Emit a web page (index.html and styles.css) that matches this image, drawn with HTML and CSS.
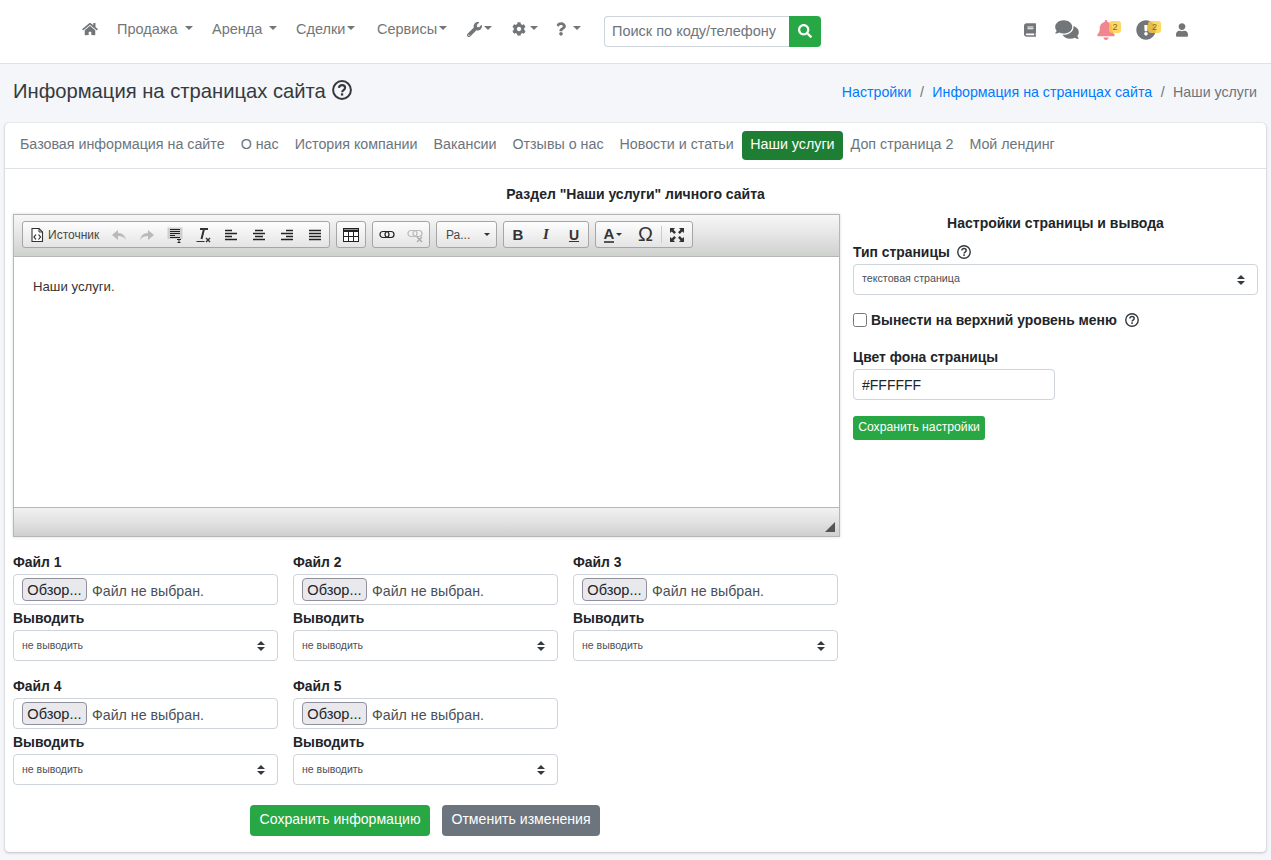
FILE: index.html
```html
<!DOCTYPE html>
<html lang="ru">
<head>
<meta charset="utf-8">
<title>Информация на страницах сайта</title>
<link rel="stylesheet" href="styles.css">
</head>
<body>
<svg class="defs" aria-hidden="true">
  <symbol id="i-home" viewBox="0 0 576 512"><path d="M280.37 148.26L96 300.11V464a16 16 0 0 0 16 16l112.06-.29a16 16 0 0 0 15.92-16V368a16 16 0 0 1 16-16h64a16 16 0 0 1 16 16v95.64a16 16 0 0 0 16 16.05L464 480a16 16 0 0 0 16-16V300L295.67 148.26a12.19 12.19 0 0 0-15.3 0zM571.6 251.47L488 182.56V44.05a12 12 0 0 0-12-12h-56a12 12 0 0 0-12 12v72.61L318.47 43a48 48 0 0 0-61 0L4.34 251.47a12 12 0 0 0-1.6 16.9l25.5 31A12 12 0 0 0 45.15 301l235.22-193.74a12.19 12.19 0 0 1 15.3 0L530.9 301a12 12 0 0 0 16.9-1.6l25.5-31a12 12 0 0 0-1.7-16.93z"/></symbol>
  <symbol id="i-search" viewBox="0 0 512 512"><path d="M505 442.7L405.3 343c-4.5-4.5-10.6-7-17-7H372c27.6-35.3 44-79.7 44-128C416 93.1 322.9 0 208 0S0 93.1 0 208s93.1 208 208 208c48.3 0 92.7-16.4 128-44v16.3c0 6.4 2.5 12.5 7 17l99.7 99.7c9.4 9.4 24.6 9.4 33.9 0l28.3-28.3c9.4-9.4 9.4-24.6.1-34zM208 336c-70.7 0-128-57.2-128-128 0-70.7 57.2-128 128-128 70.7 0 128 57.2 128 128 0 70.7-57.2 128-128 128z"/></symbol>
  <symbol id="i-user" viewBox="0 0 448 512"><path d="M224 256c70.7 0 128-57.3 128-128S294.7 0 224 0 96 57.3 96 128s57.3 128 128 128zm89.6 32h-16.7c-22.2 10.2-46.9 16-72.9 16s-50.6-5.8-72.9-16h-16.7C60.2 288 0 348.2 0 422.4V464c0 26.5 21.5 48 48 48h352c26.5 0 48-21.5 48-48v-41.6c0-74.2-60.2-134.4-134.4-134.4z"/></symbol>
  <symbol id="i-bell" viewBox="0 0 448 512"><path d="M224 512c35.32 0 63.97-28.65 63.97-64H160.03c0 35.35 28.65 64 63.97 64zm215.39-149.71c-19.32-20.76-55.47-51.99-55.47-154.29 0-77.7-54.48-139.9-127.94-155.16V32c0-17.67-14.32-32-31.98-32s-31.98 14.33-31.98 32v20.84C118.56 68.1 64.08 130.3 64.08 208c0 102.3-36.15 133.53-55.47 154.29-6 6.45-8.66 14.16-8.61 21.71.11 16.4 12.98 32 32.1 32h383.8c19.12 0 32-15.6 32.1-32 .05-7.55-2.61-15.27-8.61-21.71z"/></symbol>
  <symbol id="i-excl" viewBox="0 0 512 512"><path d="M504 256c0 136.997-111.043 248-248 248S8 392.997 8 256C8 119.083 119.043 8 256 8s248 111.083 248 248zm-248 50c-25.405 0-46 20.595-46 46s20.595 46 46 46 46-20.595 46-46-20.595-46-46-46zm-43.673-165.346l7.418 136c.347 6.364 5.609 11.346 11.982 11.346h48.546c6.373 0 11.635-4.982 11.982-11.346l7.418-136c.375-6.874-5.098-12.654-11.982-12.654h-63.383c-6.884 0-12.356 5.78-11.981 12.654z"/></symbol>
  <symbol id="i-book" viewBox="0 0 448 512"><path d="M448 360V24c0-13.3-10.7-24-24-24H96C43 0 0 43 0 96v320c0 53 43 96 96 96h328c13.3 0 24-10.7 24-24v-16c0-7.5-3.5-14.3-8.9-18.7-4.2-15.4-4.2-59.3 0-74.7 5.4-4.3 8.9-11.1 8.9-18.6zM128 134c0-3.3 2.7-6 6-6h212c3.3 0 6 2.7 6 6v20c0 3.3-2.7 6-6 6H134c-3.3 0-6-2.7-6-6v-20zm0 64c0-3.3 2.7-6 6-6h212c3.3 0 6 2.7 6 6v20c0 3.3-2.7 6-6 6H134c-3.3 0-6-2.7-6-6v-20zm253.4 250H96c-17.7 0-32-14.3-32-32 0-17.6 14.4-32 32-32h285.4c-1.9 17.1-1.9 46.9 0 64z"/></symbol>
  <symbol id="i-comments" viewBox="0 0 576 512"><path d="M416 192c0-88.4-93.1-160-208-160S0 103.6 0 192c0 34.3 14.1 65.9 38 92-13.4 30.2-35.5 54.2-35.8 54.5-2.2 2.3-2.8 5.7-1.5 8.7S4.8 352 8 352c36.6 0 66.9-12.3 88.7-25 32.2 15.7 70.3 25 111.3 25 114.9 0 208-71.6 208-160zm122 220c23.9-26 38-57.7 38-92 0-66.9-53.5-124.2-129.3-148.1.9 6.6 1.3 13.3 1.3 20.1 0 105.9-107.7 192-240 192-10.8 0-21.3-.8-31.7-1.9C207.8 439.6 281.8 480 368 480c41 0 79.1-9.2 111.3-25 21.8 12.7 52.1 25 88.7 25 3.2 0 6.1-1.9 7.3-4.8 1.3-2.9.7-6.3-1.5-8.7-.3-.3-22.4-24.2-35.8-54.5z"/></symbol>
  <symbol id="i-wrench" viewBox="0 0 512 512"><path d="M507.73 109.1c-2.24-9.03-13.54-12.09-20.12-5.51l-74.36 74.36-67.88-11.31-11.31-67.88 74.36-74.36c6.62-6.62 3.43-17.9-5.66-20.16-47.38-11.74-99.55.91-136.58 37.93-39.64 39.64-50.55 97.1-34.05 147.2L18.74 402.76c-24.99 24.99-24.99 65.51 0 90.5 24.99 24.99 65.51 24.99 90.5 0l213.21-213.21c50.12 16.71 107.47 5.68 147.37-34.22 37.07-37.07 49.7-89.32 37.91-136.73zM64 472c-13.25 0-24-10.75-24-24 0-13.26 10.75-24 24-24s24 10.74 24 24c0 13.25-10.75 24-24 24z"/></symbol>
  <symbol id="i-cog" viewBox="0 0 512 512"><path d="M487.4 315.7l-42.6-24.6c4.3-23.2 4.3-47 0-70.2l42.6-24.6c4.9-2.8 7.1-8.6 5.5-14-11.1-35.6-30-67.8-54.7-94.6-3.8-4.1-10-5.1-14.8-2.3L380.8 110c-17.9-15.4-38.5-27.3-60.8-35.1V25.8c0-5.6-3.9-10.5-9.4-11.7-36.7-8.2-74.3-7.8-109.2 0-5.5 1.2-9.4 6.1-9.4 11.7V75c-22.2 7.9-42.8 19.8-60.8 35.1L88.7 85.5c-4.9-2.8-11-1.9-14.8 2.3-24.7 26.7-43.6 58.9-54.7 94.6-1.7 5.4.6 11.2 5.5 14L67.3 221c-4.3 23.2-4.3 47 0 70.2l-42.6 24.6c-4.9 2.8-7.1 8.6-5.5 14 11.1 35.6 30 67.8 54.7 94.6 3.8 4.1 10 5.1 14.8 2.3l42.6-24.6c17.9 15.4 38.5 27.3 60.8 35.1v49.2c0 5.6 3.9 10.5 9.4 11.7 36.7 8.2 74.3 7.8 109.2 0 5.5-1.2 9.4-6.1 9.4-11.7v-49.2c22.2-7.9 42.8-19.8 60.8-35.1l42.6 24.6c4.9 2.8 11 1.9 14.8-2.3 24.7-26.7 43.6-58.9 54.7-94.6 1.5-5.5-.7-11.3-5.6-14.1zM256 336c-44.1 0-80-35.9-80-80s35.9-80 80-80 80 35.9 80 80-35.9 80-80 80z"/></symbol>
  <symbol id="i-q" viewBox="0 0 384 512"><path d="M202.021 0C122.202 0 70.503 32.703 29.914 91.026c-7.363 10.58-5.093 25.086 5.178 32.874l43.138 32.709c10.373 7.865 25.132 6.026 33.253-4.148 25.049-31.381 43.63-49.449 82.757-49.449 30.764 0 68.816 19.799 68.816 49.631 0 22.552-18.617 34.134-48.993 51.164-35.423 19.86-82.299 44.576-82.299 106.405V320c0 13.255 10.745 24 24 24h72.471c13.255 0 24-10.745 24-24v-5.773c0-42.86 125.268-44.645 125.268-160.627C377.504 66.256 286.902 0 202.021 0zM192 373.459c-38.196 0-69.271 31.075-69.271 69.271 0 38.195 31.075 69.27 69.271 69.27s69.271-31.075 69.271-69.271-31.075-69.27-69.271-69.27z"/></symbol>
  <symbol id="i-help" viewBox="0 0 20 20"><circle cx="10" cy="10" r="8.9" fill="none" stroke="currentColor" stroke-width="2"/><path d="M6.900 7.800C7.100 6 8.500 5.100 10.100 5.100c1.700 0 3 1 3 2.600 0 2.400-3 2.300-3 4.600" fill="none" stroke="currentColor" stroke-width="2.100"/><rect x="8.900" y="13.300" width="2.300" height="2.300" fill="currentColor"/></symbol>
</svg>

<header class="topbar">
  <nav class="menu">
    <a class="menu-home"><svg class="ic ic-home"><use href="#i-home"/></svg></a>
    <a class="menu-link m-sale">Продажа<i class="caret c-wide"></i></a>
    <a class="menu-link m-rent">Аренда<i class="caret c-wide"></i></a>
    <a class="menu-link m-deal">Сделки<i class="caret"></i></a>
    <a class="menu-link m-serv">Сервисы<i class="caret"></i></a>
    <a class="menu-link m-wrench"><svg class="ic ic-tool"><use href="#i-wrench"/></svg><i class="caret"></i></a>
    <a class="menu-link m-cog"><svg class="ic ic-cog"><use href="#i-cog"/></svg><i class="caret"></i></a>
    <a class="menu-link m-q"><svg class="ic ic-q"><use href="#i-q"/></svg><i class="caret c-wide"></i></a>
    <form class="search">
      <input class="search-input" type="text" placeholder="Поиск по коду/телефону">
      <button class="search-btn" type="button"><svg class="ic-search"><use href="#i-search"/></svg></button>
    </form>
  </nav>
  <div class="tray">
    <a class="tray-item t-book"><svg class="t-ic-book"><use href="#i-book"/></svg></a>
    <a class="tray-item t-comments"><svg class="t-ic-comments"><use href="#i-comments"/></svg></a>
    <a class="tray-item t-bell"><svg class="t-ic-bell"><use href="#i-bell"/></svg><span class="badge">2</span></a>
    <a class="tray-item t-excl"><svg class="t-ic-excl"><use href="#i-excl"/></svg><span class="badge badge-excl">2</span></a>
    <a class="tray-item t-user"><svg class="t-ic-user"><use href="#i-user"/></svg></a>
  </div>
</header>

<div class="page-head">
  <h1 class="page-title">Информация на страницах сайта <svg class="help-big"><use href="#i-help"/></svg></h1>
  <ol class="crumbs">
    <li><a>Настройки</a></li>
    <li class="sep">/</li>
    <li><a>Информация на страницах сайта</a></li>
    <li class="sep">/</li>
    <li class="current">Наши услуги</li>
  </ol>
</div>

<main class="card">
  <div class="tabs">
    <a class="tab">Базовая информация на сайте</a>
    <a class="tab">О нас</a>
    <a class="tab">История компании</a>
    <a class="tab">Вакансии</a>
    <a class="tab">Отзывы о нас</a>
    <a class="tab">Новости и статьи</a>
    <a class="tab tab-active">Наши услуги</a>
    <a class="tab">Доп страница 2</a>
    <a class="tab">Мой лендинг</a>
  </div>
  <div class="card-body">
    <h2 class="section-title">Раздел "Наши услуги" личного сайта</h2>
    <div class="columns">
      <section class="col-main">
        <div class="editor">
          <div class="ed-toolbar">
            <div class="ed-group ed-g1">
              <span class="ed-btn ed-source">
                <svg class="ed-ic" viewBox="0 0 16 16"><path d="M3 1.500h7l3.500 3.500v9.500H3z" fill="#fff" stroke="#333" stroke-width="1.100"/><path d="M10 1.500V5h3.500" fill="none" stroke="#333"/><path d="M7 7.500L5 10l2 2.500M9.500 7.500l2 2.500-2 2.500" fill="none" stroke="#222" stroke-width="1.200"/></svg>
                <span class="ed-source-text">Источник</span>
              </span>
              <span class="ed-btn"><svg class="ed-ic" viewBox="0 0 16 16"><path d="M1 8l6-5v3c5 0 7 3 8 7-2-3-4-4-8-4v4z" fill="#b9b9b9"/></svg></span>
              <span class="ed-btn"><svg class="ed-ic" viewBox="0 0 16 16"><path d="M15 8L9 3v3C4 6 2 9 1 13c2-3 4-4 8-4v4z" fill="#b9b9b9"/></svg></span>
              <span class="ed-btn"><svg class="ed-ic" viewBox="0 0 16 16"><rect x="0.500" y="0.500" width="15" height="11.500" fill="#cfcfcf"/><path d="M3 2.500h10M3 4.500h10M3 6.500h10M3 8.500h5M3 10.500h10" stroke="#222"/><path d="M10 12.500h4M12 12.500v3M10.500 15.500h3" stroke="#222"/></svg></span>
              <span class="ed-btn"><svg class="ed-ic" viewBox="0 0 16 16"><path d="M5 2h8M9 2L6.500 12" fill="none" stroke="#333" stroke-width="2"/><path d="M1.500 14.500h8" stroke="#333"/><path d="M11 11l4 4M15 11l-4 4" stroke="#333" stroke-width="1.400"/></svg></span>
              <span class="ed-btn"><svg class="ed-ic" viewBox="0 0 16 16"><path d="M2 3.500h7M2 6.500h12M2 9.500h7M2 12.500h12" stroke="#222" stroke-width="1.400"/></svg></span>
              <span class="ed-btn"><svg class="ed-ic" viewBox="0 0 16 16"><path d="M4 3.500h8M2 6.500h12M4 9.500h8M2 12.500h12" stroke="#222" stroke-width="1.400"/></svg></span>
              <span class="ed-btn"><svg class="ed-ic" viewBox="0 0 16 16"><path d="M7 3.500h7M2 6.500h12M7 9.500h7M2 12.500h12" stroke="#222" stroke-width="1.400"/></svg></span>
              <span class="ed-btn"><svg class="ed-ic" viewBox="0 0 16 16"><path d="M2 3.500h12M2 6.500h12M2 9.500h12M2 12.500h12" stroke="#222" stroke-width="1.400"/></svg></span>
            </div>
            <div class="ed-group">
              <span class="ed-btn ed-table"><svg class="ed-ic" viewBox="0 0 16 16"><rect x="0.500" y="1.500" width="15" height="13" fill="#fff" stroke="#222"/><path d="M0.500 2.500h15v2.500h-15z" fill="#222"/><path d="M0.500 9.500h15M5.500 5v9M10.500 5v9" stroke="#222"/></svg></span>
            </div>
            <div class="ed-group">
              <span class="ed-btn"><svg class="ed-ic" viewBox="0 0 16 16"><rect x="1" y="4.500" width="9" height="6" rx="3" fill="none" stroke="#222" stroke-width="1.200"/><rect x="6" y="4.500" width="9" height="6" rx="3" fill="none" stroke="#222" stroke-width="1.200"/></svg></span>
              <span class="ed-btn"><svg class="ed-ic" viewBox="0 0 16 16"><rect x="1" y="3.500" width="9" height="6" rx="3" fill="none" stroke="#bbb" stroke-width="1.200"/><rect x="6" y="3.500" width="9" height="6" rx="3" fill="none" stroke="#bbb" stroke-width="1.200"/><path d="M10 10l5 5M15 10l-5 5" stroke="#aaa" stroke-width="1.400"/></svg></span>
            </div>
            <div class="ed-group ed-combo">
              <span class="ed-combo-text">Ра...</span><i class="ed-arrow"></i>
            </div>
            <div class="ed-group">
              <span class="ed-btn ed-letter ed-b">B</span>
              <span class="ed-btn ed-letter ed-i">I</span>
              <span class="ed-btn ed-letter ed-u">U</span>
            </div>
            <div class="ed-group">
              <span class="ed-btn ed-color"><span class="ed-color-a">A</span><i class="ed-arrow ed-arrow-sm"></i></span>
              <span class="ed-btn ed-omega">Ω</span>
              <span class="ed-btn ed-max"><svg class="ed-ic" viewBox="0 0 16 16"><path d="M1 1h5L4.500 2.800 7 5.200 5.200 7 2.800 4.500 1 6zM15 1v5l-1.800-1.500L10.800 7 9 5.200l2.500-2.400L10 1zM1 15v-5l1.800 1.500L5.200 9 7 10.800l-2.500 2.400L6 15zM15 15h-5l1.500-1.800L9 10.800 10.800 9l2.400 2.500L15 10z" fill="#333"/></svg></span>
            </div>
          </div>
          <div class="ed-content"><p class="ed-text">Наши услуги.</p></div>
          <div class="ed-bottom"><i class="ed-resize"></i></div>
        </div>

        <div class="files">
          <div class="file-cell">
            <label class="lbl">Файл 1</label>
            <div class="file-box"><button class="file-btn" type="button">Обзор...</button><span class="file-name">Файл не выбран.</span></div>
            <label class="lbl lbl-out">Выводить</label>
            <select class="sel sel-out"><option>не выводить</option></select>
          </div>
          <div class="file-cell">
            <label class="lbl">Файл 2</label>
            <div class="file-box"><button class="file-btn" type="button">Обзор...</button><span class="file-name">Файл не выбран.</span></div>
            <label class="lbl lbl-out">Выводить</label>
            <select class="sel sel-out"><option>не выводить</option></select>
          </div>
          <div class="file-cell">
            <label class="lbl">Файл 3</label>
            <div class="file-box"><button class="file-btn" type="button">Обзор...</button><span class="file-name">Файл не выбран.</span></div>
            <label class="lbl lbl-out">Выводить</label>
            <select class="sel sel-out"><option>не выводить</option></select>
          </div>
          <div class="file-cell">
            <label class="lbl">Файл 4</label>
            <div class="file-box"><button class="file-btn" type="button">Обзор...</button><span class="file-name">Файл не выбран.</span></div>
            <label class="lbl lbl-out">Выводить</label>
            <select class="sel sel-out"><option>не выводить</option></select>
          </div>
          <div class="file-cell">
            <label class="lbl">Файл 5</label>
            <div class="file-box"><button class="file-btn" type="button">Обзор...</button><span class="file-name">Файл не выбран.</span></div>
            <label class="lbl lbl-out">Выводить</label>
            <select class="sel sel-out"><option>не выводить</option></select>
          </div>
        </div>

        <div class="actions">
          <button class="btn btn-green" type="button">Сохранить информацию</button>
          <button class="btn btn-grey" type="button">Отменить изменения</button>
        </div>
      </section>

      <aside class="col-side">
        <h3 class="side-title">Настройки страницы и вывода</h3>
        <label class="lbl lbl-type">Тип страницы <svg class="help"><use href="#i-help"/></svg></label>
        <select class="sel sel-type"><option>текстовая страница</option></select>
        <label class="check-row"><input class="check" type="checkbox"><span class="lbl">Вынести на верхний уровень меню</span> <svg class="help help-check"><use href="#i-help"/></svg></label>
        <label class="lbl lbl-color">Цвет фона страницы</label>
        <input class="color-input" type="text" value="#FFFFFF">
        <button class="btn btn-green btn-small" type="button">Сохранить настройки</button>
      </aside>
    </div>
  </div>
</main>
</body>
</html>
```

FILE: styles.css
```css
* { box-sizing: border-box; }
html, body { margin: 0; padding: 0; }
body {
  width: 1271px;
  height: 860px;
  overflow: hidden;
  background: #f4f6f9;
  color: #212529;
  font-family: "Liberation Sans", Arial, sans-serif;
  font-size: 14px;
}
.defs { display: none; }
svg { display: block; fill: currentColor; }
h1, h2, h3, p, ol { margin: 0; padding: 0; }

/* top bar */
.topbar {
  height: 64px;
  background: #fff;
  border-bottom: 1px solid #dee2e6;
  display: flex;
  align-items: center;
  position: relative;
  padding-bottom: 1px;
}
.menu { display: flex; align-items: center; padding-left: 82px; color: #737679; }
.menu-link { display: flex; align-items: center; font-size: 14.5px; color: #737679; margin-top: -4px; }
.menu-home { margin-right: 19px; margin-top: -4px; }
.ic-home { width: 16px; height: 14px; }
.m-sale { width: 95px; }
.m-rent { width: 84px; }
.m-deal { width: 81px; }
.m-serv { width: 89px; }
.m-wrench { width: 45px; }
.m-cog { width: 45px; }
.m-q { width: 48px; }
.ic-tool { width: 15px; height: 15px; margin-left: 1px; }
.ic-cog { width: 14px; height: 14px; margin-left: 1px; margin-right: 2px; }
.ic-q { width: 10px; height: 14px; }
.caret {
  display: inline-block;
  margin-left: 2px;
  width: 0; height: 0;
  border-left: 4px solid transparent;
  border-right: 4px solid transparent;
  border-top: 4px solid #737679;
  margin-top: -2px;
}
.c-wide { margin-left: 7px; }
.search { display: flex; height: 31px; margin-top: 1px; }
.search-input {
  width: 185px;
  height: 31px;
  padding: 0 7px 2px;
  border: 1px solid #ced4da;
  border-right: 0;
  border-radius: 4px 0 0 4px;
  font: 14.5px "Liberation Sans", Arial, sans-serif;
  color: #495057;
  outline: 0;
}
.search-input::placeholder { color: #6c757d; opacity: 1; }
.search-btn {
  width: 32px; height: 31px;
  padding: 0 0 2px;
  border: 0;
  border-radius: 0 4px 4px 0;
  background: #28a745;
  color: #fff;
  display: flex; align-items: center; justify-content: center;
}
.ic-search { width: 14px; height: 14px; }

.tray { position: absolute; left: 1024px; top: 19px; display: flex; align-items: center; color: #737679; }
.tray-item { position: relative; display: block; }
.t-book { margin-right: 19px; }
.t-comments { margin-right: 18px; }
.t-bell { margin-right: 21px; }
.t-excl { margin-right: 20px; }
.t-ic-book { width: 12px; height: 14px; }
.t-ic-comments { width: 24px; height: 21px; }
.t-ic-bell { width: 18px; height: 20px; color: #f0868f; }
.t-ic-excl { width: 20px; height: 20px; }
.t-ic-user { width: 12px; height: 14px; }
.badge {
  position: absolute;
  left: 12px; top: 1px;
  width: 12px; height: 12px;
  border-radius: 3px;
  background: rgba(255, 205, 60, .8);
  color: #7d6a2a;
  font-size: 9px;
  line-height: 12px;
  text-align: center;
}
.badge-excl { left: 12px; width: 13px; }

/* page head */
.page-head { height: 59px; display: flex; align-items: center; justify-content: space-between; padding: 0 14px 6px 13px; }
.page-title { font-size: 20.2px; font-weight: 400; line-height: 24px; display: flex; align-items: center; gap: 6px; color: #343a40; }
.help-big { width: 20px; height: 20px; margin-top: -2px; }
.crumbs { list-style: none; display: flex; font-size: 14.2px; color: #6c757d; margin-top: 3px; }
.crumbs a { color: #007bff; }
.sep { padding: 0 8.5px; }
.current { color: #6c757d; }

/* card */
.card {
  margin: 0 5px;
  width: 1261px;
  height: 729px;
  background: #fff;
  border-radius: 4px;
  box-shadow: 0 0 1px rgba(0,0,0,.25), 0 1px 3px rgba(0,0,0,.2);
}
.tabs { height: 46px; display: flex; align-items: center; padding: 0 8px 1px 7px; border-bottom: 1px solid #dee2e6; }
.tab { display: block; padding: 0 8px; height: 29px; line-height: 27px; border-radius: 4px; color: #6c757d; font-size: 14.28px; }
.tab-active { background: #1e7e34; color: #fff; margin-left: 0.5px; }
.card-body { padding: 17px 8px 0; }
.section-title { font-size: 14px; font-weight: 700; line-height: 16px; text-align: center; color: #212529; }
.columns { display: flex; gap: 13px; margin-top: 12px; }
.col-main { width: 827px; }
.col-side { width: 405px; }

/* editor */
.editor { height: 323px; border: 1px solid #b6b6b6; box-shadow: 0 0 3px rgba(0,0,0,.15); display: flex; flex-direction: column; }
.ed-toolbar {
  height: 42px;
  display: flex;
  gap: 6px;
  padding: 6px 0 0 8px;
  background: linear-gradient(#f7f7f7, #cfd1cf);
  border-bottom: 1px solid #b6b6b6;
}
.ed-group {
  height: 27px;
  display: flex;
  align-items: center;
  border: 1px solid #a6a6a6;
  border-radius: 3px;
  background: linear-gradient(#fdfdfd, #e4e4e4);
}
.ed-g1 { width: 308px; }
.ed-btn { width: 28px; height: 25px; display: flex; align-items: center; justify-content: center; }
.ed-ic { width: 16px; height: 16px; }
.ed-source { width: 82px; justify-content: flex-start; padding-left: 6px; gap: 3px; }
.ed-source-text { font-size: 12px; color: #474747; }
.ed-table { width: 28px; }
.ed-combo { width: 61px; padding-left: 9px; font-size: 12px; color: #484848; }
.ed-combo-text { width: 38px; }
.ed-arrow { width: 0; height: 0; border-left: 3px solid transparent; border-right: 3px solid transparent; border-top: 3px solid #333; }
.ed-arrow-sm { margin-left: 2px; }
.ed-letter { font-size: 15px; color: #333; }
.ed-b { font-weight: 700; }
.ed-i { font-family: "Liberation Serif", serif; font-style: italic; font-weight: 700; }
.ed-u { font-weight: 700; text-decoration: underline; font-size: 14px; }
.ed-color-a { font-weight: 700; font-size: 15px; color: #333; border-bottom: 2px solid #555; line-height: 15px; }
.ed-color { width: 34px; }
.ed-omega { font-size: 20px; color: #333; border-right: 1px solid #ccc; height: 17px; line-height: 17px; width: 32px; }
.ed-max { width: 30px; }
.ed-content { height: 250px; background: #fff; }
.ed-text { padding: 21px 19px 0; font-size: 13.2px; line-height: 18px; color: #333; }
.ed-bottom {
  flex: 1;
  position: relative;
  border-top: 1px solid #b6b6b6;
  background: linear-gradient(#f2f2f2, #cfd1cf);
}
.ed-resize {
  position: absolute;
  right: 4px; bottom: 4px;
  width: 0; height: 0;
  border-left: 10px solid transparent;
  border-bottom: 10px solid #555;
}

/* files */
.files { display: grid; grid-template-columns: repeat(3, 265px); column-gap: 15px; row-gap: 17px; margin-top: 17px; }
.file-cell { display: flex; flex-direction: column; }
.lbl { display: block; font-size: 13.9px; font-weight: 700; line-height: 16px; color: #212529; }
.file-box {
  margin-top: 4px;
  height: 31px;
  border: 1px solid #ced4da;
  border-radius: 4px;
  display: flex;
  align-items: center;
  padding-left: 8px;
}
.file-btn {
  width: 65px; height: 23px;
  padding: 0;
  font: 14.6px "Liberation Sans", Arial, sans-serif;
  color: #212529;
  background: #e9e9ed;
  border: 1px solid #8f8f9d;
  border-radius: 4px;
}
.file-name { margin: 2px 0 0 5px; font-size: 14.2px; color: #495057; }
.lbl-out { margin-top: 5px; }
.sel {
  appearance: none;
  -webkit-appearance: none;
  display: block;
  width: 100%;
  height: 31px;
  margin-top: 4px;
  padding: 0 8px;
  border: 1px solid #ced4da;
  border-radius: 4px;
  color: #495057;
  background: #fff url("data:image/svg+xml,%3Csvg xmlns='http://www.w3.org/2000/svg' width='8' height='10'%3E%3Cpath d='M4 0l4 4H0zM4 10L0 6h8z' fill='%23343a40'/%3E%3C/svg%3E") no-repeat right 12px center;
}
.sel-out { font: 10.5px "Liberation Sans", Arial, sans-serif; padding-bottom: 2px; }
.sel-type { font: 10.7px "Liberation Sans", Arial, sans-serif; padding-bottom: 3px; }

/* actions */
.actions { display: flex; justify-content: center; gap: 12px; margin-top: 20px; padding-right: 3px; }
.btn { height: 31px; border: 0; border-radius: 4px; color: #fff; font: 14.1px "Liberation Sans", Arial, sans-serif; padding: 0 0 3px; }
.btn-green { background: #28a745; width: 180px; }
.btn-grey { background: #6c757d; width: 158px; }
.btn-small { display: block; width: 132px; height: 24px; margin-top: 16px; font-size: 12.2px; border-radius: 3px; padding-bottom: 2px; }

/* side */
.side-title { font-size: 14px; font-weight: 700; line-height: 16px; text-align: center; margin-top: 0; color: #212529; padding-top: 1px; }
.lbl-type { display: flex; align-items: center; gap: 7px; margin-top: 13px; }
.help { width: 14px; height: 14px; color: #343a40; }
.col-side > .sel { margin-top: 4px; }
.check-row { display: flex; align-items: center; margin-top: 16px; height: 17px; }
.check { margin: 0 4px 0 0; width: 14px; height: 14px; }
.help-check { margin-left: 8px; }
.lbl-color { margin-top: 21px; }
.color-input {
  display: block;
  width: 202px; height: 31px;
  margin-top: 4px;
  padding: 0 8px;
  border: 1px solid #ced4da;
  border-radius: 4px;
  font: 14px "Liberation Sans", Arial, sans-serif;
  color: #212529;
}
```
